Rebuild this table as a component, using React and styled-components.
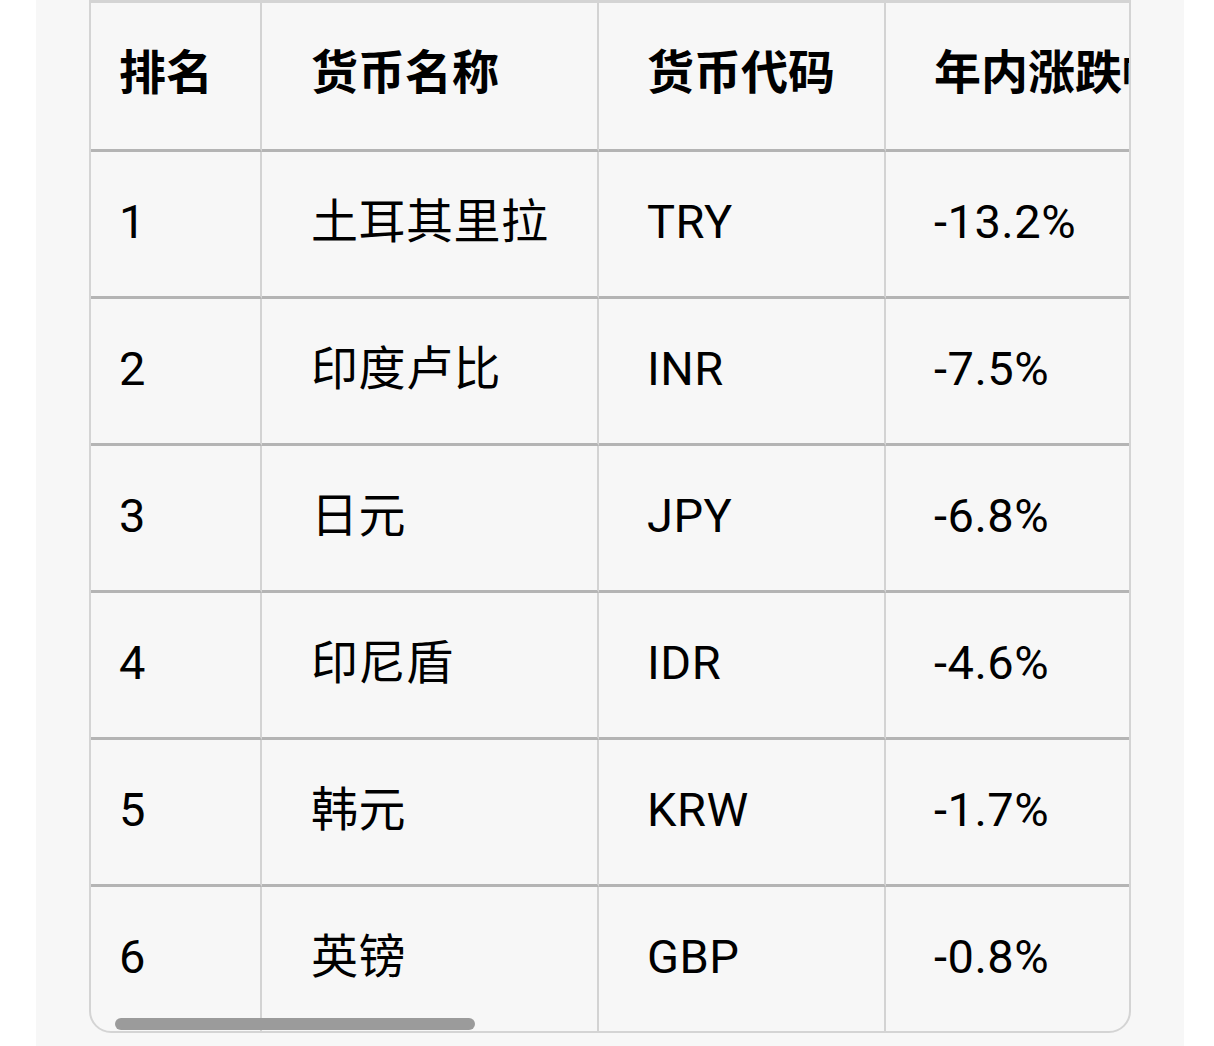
import React from "react";
import styled, { createGlobalStyle } from "styled-components";

const GlobalStyle = createGlobalStyle`
  html, body {
    margin: 0;
    padding: 0;
    background: #ffffff;
  }
  body {
    font-family: Roboto, "Noto Sans CJK SC", sans-serif;
    color: #000;
  }
`;

const Page = styled.div`
  display: flex;
  padding: 0 30px 0 36px;
  min-height: 1046px;
  box-sizing: border-box;
`;

const Panel = styled.div`
  flex: 1;
  min-width: 0;
  background: #f7f7f7;
  padding: 0 53px;
  min-height: 1046px;
  box-sizing: border-box;
`;

const TableFrame = styled.div`
  position: relative;
  min-width: 0;
  background: #f7f7f7;
  border: 2px solid #d4d4d4;
  border-top-width: 3px;
  border-radius: 0 0 22px 22px;
  overflow: hidden;
`;

const Scroller = styled.div`
  width: 100%;
  overflow-x: auto;
  scrollbar-width: none;
  &::-webkit-scrollbar {
    display: none;
  }
`;

const Table = styled.table`
  border-collapse: separate;
  border-spacing: 0;
  table-layout: fixed;
  width: ${(p) => p.$width}px;
  font-size: 47px;
  line-height: 1.2;
`;

const Col = styled.col`
  width: ${(p) => p.$w}px;
`;

const HeadCell = styled.th`
  height: 140px;
  padding: 0 0 6px ${(p) => p.$pad}px;
  text-align: left;
  vertical-align: middle;
  font-weight: 700;
  white-space: nowrap;
  overflow: hidden;
  border-bottom: 3px solid #b4b4b4;
  border-right: ${(p) => (p.$lastCol ? "none" : "2px solid #d3d3d3")};
`;

const BodyCell = styled.td`
  height: 140px;
  padding: 0 0 4px ${(p) => p.$pad}px;
  text-align: left;
  vertical-align: middle;
  font-weight: 400;
  white-space: nowrap;
  overflow: hidden;
  letter-spacing: 0.5px;
  border-bottom: ${(p) => (p.$lastRow ? "none" : "3px solid #b4b4b4")};
  border-right: ${(p) => (p.$lastCol ? "none" : "2px solid #d3d3d3")};
`;

const ScrollThumb = styled.div`
  position: absolute;
  left: 24px;
  bottom: 1px;
  width: 360px;
  height: 12px;
  border-radius: 6px;
  background: #9b9b9b;
`;

const columns = [
  { title: "排名", width: 171, pad: 28 },
  { title: "货币名称", width: 337, pad: 49 },
  { title: "货币代码", width: 287, pad: 48 },
  { title: "年内涨跌幅", width: 420, pad: 48 },
];

const rows = [
  ["1", "土耳其里拉", "TRY", "-13.2%"],
  ["2", "印度卢比", "INR", "-7.5%"],
  ["3", "日元", "JPY", "-6.8%"],
  ["4", "印尼盾", "IDR", "-4.6%"],
  ["5", "韩元", "KRW", "-1.7%"],
  ["6", "英镑", "GBP", "-0.8%"],
];

export default function App() {
  const total = columns.reduce((s, c) => s + c.width, 0);
  return (
    <>
      <GlobalStyle />
      <Page>
        <Panel>
          <TableFrame>
            <Scroller>
              <Table $width={total}>
                <colgroup>
                  {columns.map((c) => (
                    <Col key={c.title} $w={c.width} />
                  ))}
                </colgroup>
                <thead>
                  <tr>
                    {columns.map((c, i) => (
                      <HeadCell
                        key={c.title}
                        $pad={c.pad}
                        $lastCol={i === columns.length - 1}
                      >
                        {c.title}
                      </HeadCell>
                    ))}
                  </tr>
                </thead>
                <tbody>
                  {rows.map((r, ri) => (
                    <tr key={r[0]}>
                      {r.map((v, ci) => (
                        <BodyCell
                          key={ci}
                          $pad={columns[ci].pad}
                          $lastCol={ci === columns.length - 1}
                          $lastRow={ri === rows.length - 1}
                        >
                          {v}
                        </BodyCell>
                      ))}
                    </tr>
                  ))}
                </tbody>
              </Table>
            </Scroller>
            <ScrollThumb />
          </TableFrame>
        </Panel>
      </Page>
    </>
  );
}
